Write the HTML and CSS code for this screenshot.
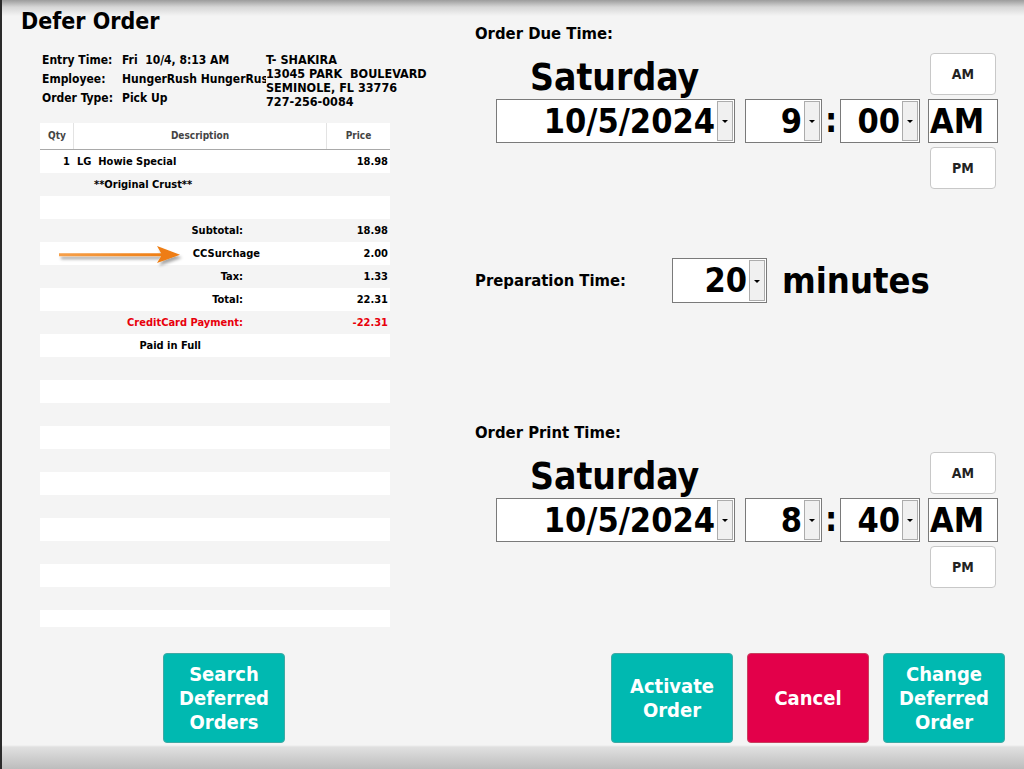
FILE: index.html
```html
<!DOCTYPE html>
<html lang="en">

<head>
    <meta charset="UTF-8">
    <meta name="viewport" content="width=device-width, initial-scale=1.0">
    <title>Defer Order</title>
    <link rel="stylesheet" href="styles.css">
</head>

<body>
    <div class="screen">
        <div class="main">
            <div class="left">
                <h1 class="title">Defer Order</h1>

                <div class="info">
                    <div class="facts">
                        <span>Entry Time:</span><span>Fri&nbsp; 10/4, 8:13 AM</span>
                        <span>Employee:</span><span>HungerRush HungerRush</span>
                        <span>Order Type:</span><span>Pick Up</span>
                    </div>
                    <div class="address">
                        <div>T- SHAKIRA</div>
                        <div>13045 PARK&nbsp; BOULEVARD</div>
                        <div>SEMINOLE, FL 33776</div>
                        <div>727-256-0084</div>
                    </div>
                </div>

                <div class="ticket">
                    <div class="ticket-head">
                        <div class="qty">Qty</div>
                        <div class="desc">Description</div>
                        <div class="price">Price</div>
                    </div>
                    <div class="ticket-body">
                        <div class="row"><div class="qty">1</div><div class="desc">LG&nbsp; Howie Special</div><div class="price">18.98</div></div>
                        <div class="row"><div class="qty"></div><div class="desc mod">**Original Crust**</div><div class="price"></div></div>
                        <div class="row"></div>
                        <div class="row"><div class="qty"></div><div class="desc sum">Subtotal:</div><div class="price">18.98</div></div>
                        <div class="row"><div class="qty"></div><div class="desc fee">CCSurchage</div><div class="price">2.00</div></div>
                        <div class="row"><div class="qty"></div><div class="desc sum">Tax:</div><div class="price">1.33</div></div>
                        <div class="row"><div class="qty"></div><div class="desc sum">Total:</div><div class="price">22.31</div></div>
                        <div class="row pay"><div class="qty"></div><div class="desc sum">CreditCard Payment:</div><div class="price">-22.31</div></div>
                        <div class="row"><div class="qty"></div><div class="desc paid">Paid in Full</div><div class="price"></div></div>
                        <div class="row"></div>
                        <div class="row"></div>
                        <div class="row"></div>
                        <div class="row"></div>
                        <div class="row"></div>
                        <div class="row"></div>
                        <div class="row"></div>
                        <div class="row"></div>
                        <div class="row"></div>
                        <div class="row"></div>
                        <div class="row"></div>
                        <div class="row"></div>
                    </div>

                    <svg class="arrow" width="130" height="26" viewBox="0 0 130 26">
                        <defs>
                            <linearGradient id="shaft" x1="0" x2="1" y1="0" y2="0">
                                <stop offset="0" stop-color="#f6a04a" />
                                <stop offset="1" stop-color="#ee7d12" />
                            </linearGradient>
                            <filter id="shade" x="-10%" y="-50%" width="120%" height="200%">
                                <feDropShadow dx="2" dy="3" stdDeviation="1.6" flood-color="#000" flood-opacity="0.35" />
                            </filter>
                        </defs>
                        <g filter="url(#shade)">
                            <path d="M2 11.3 H108 V14.3 H2 Z" fill="url(#shaft)" />
                            <path d="M100 4 L123 12.7 L100 21 L105 12.7 Z" fill="#ee7d12" />
                        </g>
                    </svg>
                </div>
            </div>

            <div class="right">
                <div class="group-label">Order Due Time:</div>
                <div class="clock">
                    <div class="day">Saturday</div>
                    <button class="meridiem-btn am">AM</button>
                    <div class="pickers">
                        <div class="combo date">10/5/2024<span class="drop"></span></div>
                        <div class="combo hour">9<span class="drop"></span></div>
                        <div class="colon">:</div>
                        <div class="combo minute">00<span class="drop"></span></div>
                    </div>
                    <div class="meridiem">AM</div>
                    <button class="meridiem-btn pm">PM</button>
                </div>

                <div class="prep">
                    <div class="group-label">Preparation Time:</div>
                    <div class="combo prep-box">20<span class="drop"></span></div>
                    <div class="minutes">minutes</div>
                </div>

                <div class="group-label print-label">Order Print Time:</div>
                <div class="clock">
                    <div class="day">Saturday</div>
                    <button class="meridiem-btn am">AM</button>
                    <div class="pickers">
                        <div class="combo date">10/5/2024<span class="drop"></span></div>
                        <div class="combo hour">8<span class="drop"></span></div>
                        <div class="colon">:</div>
                        <div class="combo minute">40<span class="drop"></span></div>
                    </div>
                    <div class="meridiem">AM</div>
                    <button class="meridiem-btn pm">PM</button>
                </div>
            </div>
        </div>

        <div class="footer">
            <button class="action">Search<br>Deferred<br>Orders</button>
            <div class="actions">
                <button class="action">Activate<br>Order</button>
                <button class="action cancel">Cancel</button>
                <button class="action">Change<br>Deferred<br>Order</button>
            </div>
        </div>
    </div>
</body>

</html>
```

FILE: styles.css
```css
html,
body {
    margin: 0;
    height: 100%;
    overflow: hidden;
}

body {
    font-family: "DejaVu Sans Condensed", "DejaVu Sans", sans-serif;
    font-stretch: condensed;
    color: #000;
}

.screen {
    height: 769px;
    box-sizing: border-box;
    border-left: 2px solid #2a2a2a;
    background: linear-gradient(to bottom,
            #9c9c9c 0,
            #d6d6d6 7px,
            #f4f4f4 16px,
            #f4f4f4 745px,
            #e0e0e0 747px,
            #bdbdbd 769px);
}

.main {
    display: flex;
    height: 653px;
}

/* left side: order ticket */

.left {
    position: relative;
    width: 473px;
    flex: none;
}

.title {
    margin: 7px 0 0 19px;
    font-size: 23px;
    line-height: 28px;
    font-weight: bold;
}

.info {
    display: flex;
    margin: 18px 0 0 40px;
    font-size: 12px;
    font-weight: bold;
}

.facts {
    display: grid;
    grid-template-columns: 80px 144px;
    line-height: 17.5px;
    margin-top: -1px;
}

.facts span {
    white-space: nowrap;
    overflow: hidden;
}

.address {
    line-height: 14px;
    font-size: 12.5px;
}

.ticket {
    position: relative;
    width: 350px;
    margin: 14px 0 0 38px;
}

.ticket-head,
.row {
    display: grid;
    grid-template-columns: 34px 253px 63px;
}

.ticket-head {
    height: 26px;
    background: #fff;
    border-bottom: 1px solid #a9a9a9;
    font-size: 10px;
    font-weight: bold;
    color: #444;
    line-height: 26px;
}

.ticket-head .qty {
    padding-left: 8px;
    border-right: 1px solid #e3e3e3;
}

.ticket-head .desc {
    text-align: center;
    border-right: 1px solid #e3e3e3;
}

.ticket-head .price {
    text-align: center;
}

.ticket-body {
    height: 477px;
    overflow: hidden;
}

.row {
    height: 23px;
    line-height: 24px;
    font-size: 11px;
    font-weight: bold;
    background: #f4f4f4;
}

.row:nth-child(odd) {
    background: #fff;
}

.row .qty {
    text-align: right;
    padding-right: 4px;
}

.row .desc {
    padding-left: 3px;
    white-space: nowrap;
}

.row .price {
    text-align: right;
    padding-right: 2px;
}

.row .mod {
    padding-left: 20px;
}

.row .sum {
    text-align: right;
    padding-right: 84px;
}

.row .fee {
    text-align: right;
    padding-right: 67px;
}

.row .paid {
    text-align: right;
    padding-right: 126px;
}

.row.pay {
    color: #e8000b;
}

.arrow {
    position: absolute;
    left: 17px;
    top: 119px;
}

/* right side: times */

.right {
    flex: 1;
    padding-top: 24px;
}

.group-label {
    font-size: 16.5px;
    line-height: 20px;
    font-weight: bold;
}

.clock {
    display: grid;
    grid-template-columns: 432px 70px;
    grid-template-rows: 42px 44px 42px;
    row-gap: 4px;
    margin: 9px 0 0 21px;
}

.day {
    grid-column: 1;
    grid-row: 1;
    padding-left: 34px;
    font-size: 37px;
    font-weight: bold;
    line-height: 42px;
    align-self: end;
    margin-bottom: -4px;
}

.pickers {
    grid-column: 1;
    grid-row: 2;
    display: flex;
    align-items: stretch;
}

.combo {
    position: relative;
    box-sizing: border-box;
    height: 44px;
    border: 1px solid #7a7a7a;
    background: #fff;
    font-size: 34px;
    font-weight: bold;
    line-height: 42px;
    text-align: right;
    padding-right: 19px;
}

.drop {
    position: absolute;
    top: 1px;
    right: 1px;
    bottom: 1px;
    width: 14px;
    background: #f0f0f0;
    border: 1px solid #acacac;
}

.drop::after {
    content: "";
    position: absolute;
    left: 4px;
    top: 50%;
    margin-top: -1px;
    border-left: 3px solid transparent;
    border-right: 3px solid transparent;
    border-top: 3px solid #000;
}

.date {
    width: 239px;
}

.hour {
    width: 77px;
    margin-left: 10px;
}

.minute {
    width: 80px;
}

.colon {
    width: 18px;
    text-align: center;
    font-size: 34px;
    font-weight: bold;
    line-height: 42px;
}

.meridiem {
    grid-column: 2;
    grid-row: 2;
    box-sizing: border-box;
    border: 1px solid #7a7a7a;
    background: #fff;
    font-size: 34px;
    font-weight: bold;
    line-height: 42px;
    padding-left: 1px;
}

.meridiem-btn {
    grid-column: 2;
    justify-self: center;
    width: 66px;
    height: 42px;
    border: 1px solid #c8c8c8;
    border-radius: 4px;
    background: #fff;
    font-family: inherit;
    font-stretch: condensed;
    font-size: 14px;
    font-weight: bold;
    color: #222;
    padding: 0;
}

.meridiem-btn.am {
    grid-row: 1;
}

.meridiem-btn.pm {
    grid-row: 3;
}

.prep {
    display: flex;
    align-items: center;
    height: 45px;
    margin-top: 69px;
}

.prep .group-label {
    width: 197px;
}

.prep-box {
    width: 95px;
    height: 45px;
}

.minutes {
    margin-left: 15px;
    font-size: 36px;
    font-weight: bold;
}

.print-label {
    margin-top: 120px;
}

/* bottom buttons */

.footer {
    display: flex;
    justify-content: space-between;
    height: 90px;
    padding: 0 19px 0 161px;
}

.actions {
    display: flex;
    gap: 14px;
}

.action {
    width: 122px;
    height: 90px;
    border: 1px solid #3fa9a4;
    border-radius: 4px;
    background: #00b9b1;
    color: #fff;
    font-family: inherit;
    font-stretch: condensed;
    font-size: 20px;
    font-weight: bold;
    line-height: 24px;
    padding: 0;
}

.action.cancel {
    background: #e3004a;
    border-color: #c8405e;
}
```
